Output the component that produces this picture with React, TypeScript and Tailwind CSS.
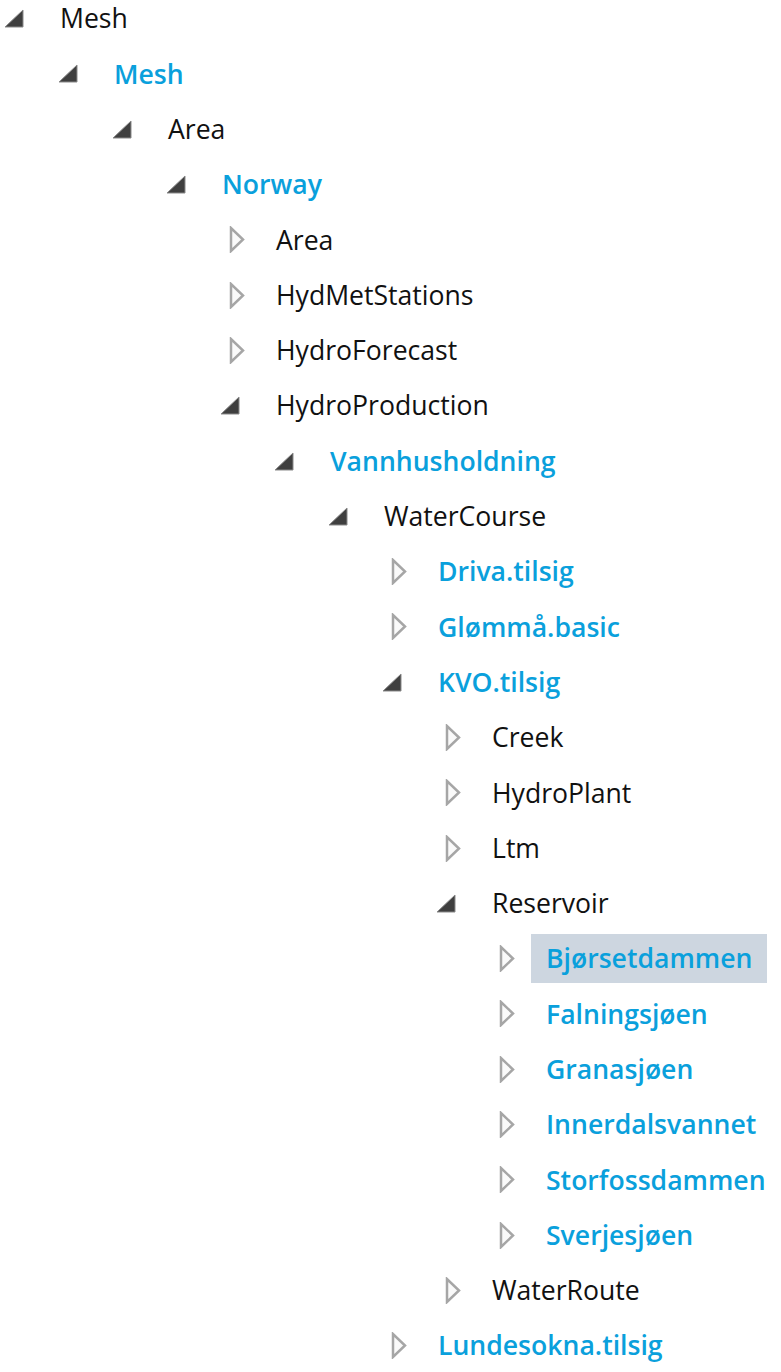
import React from "react";

type Node = {
  level: number;
  label: string;
  blue?: boolean;
  open?: boolean;
  selected?: boolean;
};

const nodes: Node[] = [
  { level: 0, label: "Mesh", open: true },
  { level: 1, label: "Mesh", blue: true, open: true },
  { level: 2, label: "Area", open: true },
  { level: 3, label: "Norway", blue: true, open: true },
  { level: 4, label: "Area" },
  { level: 4, label: "HydMetStations" },
  { level: 4, label: "HydroForecast" },
  { level: 4, label: "HydroProduction", open: true },
  { level: 5, label: "Vannhusholdning", blue: true, open: true },
  { level: 6, label: "WaterCourse", open: true },
  { level: 7, label: "Driva.tilsig", blue: true },
  { level: 7, label: "Glømmå.basic", blue: true },
  { level: 7, label: "KVO.tilsig", blue: true, open: true },
  { level: 8, label: "Creek" },
  { level: 8, label: "HydroPlant" },
  { level: 8, label: "Ltm" },
  { level: 8, label: "Reservoir", open: true },
  { level: 9, label: "Bjørsetdammen", blue: true, selected: true },
  { level: 9, label: "Falningsjøen", blue: true },
  { level: 9, label: "Granasjøen", blue: true },
  { level: 9, label: "Innerdalsvannet", blue: true },
  { level: 9, label: "Storfossdammen", blue: true },
  { level: 9, label: "Sverjesjøen", blue: true },
  { level: 8, label: "WaterRoute" },
  { level: 7, label: "Lundesokna.tilsig", blue: true },
];

function ExpandedGlyph() {
  return (
    <svg width="20" height="19" viewBox="0 0 20 19" className="ml-[4px]">
      <polygon points="19,1 19,18 1,18" fill="#3f3f3f" stroke="#8a8a8a" strokeWidth="1" />
    </svg>
  );
}

function CollapsedGlyph() {
  return (
    <svg width="16" height="27" viewBox="0 0 16 27" className="ml-[13px]">
      <polygon points="2,2 2,25 14,13.5" fill="#fafafa" stroke="#a6a6a6" strokeWidth="2.5" strokeLinejoin="miter" />
    </svg>
  );
}

export default function App() {
  return (
    <div className="w-[781px] h-[1372px] overflow-hidden bg-white font-['Open_Sans',sans-serif] text-[26.6px]">
      <div className="-mt-[9px]">
        {nodes.map((n, i) => (
          <div
            key={i}
            className="flex items-center h-[55.3px]"
            style={{ paddingLeft: n.level * 54 }}
          >
            <div className="w-[60px] shrink-0 flex items-center">
              {n.open ? <ExpandedGlyph /> : <CollapsedGlyph />}
            </div>
            <span
              className={
                "whitespace-nowrap leading-none " +
                (n.blue ? "text-[#0aa0dc] font-semibold " : "text-[#111] ") +
                (n.selected ? "bg-[#cdd6e0] -ml-[15px] pl-[15px] pr-[15px] h-[49px] flex items-center" : "")
              }
            >
              {n.label}
            </span>
          </div>
        ))}
      </div>
    </div>
  );
}
